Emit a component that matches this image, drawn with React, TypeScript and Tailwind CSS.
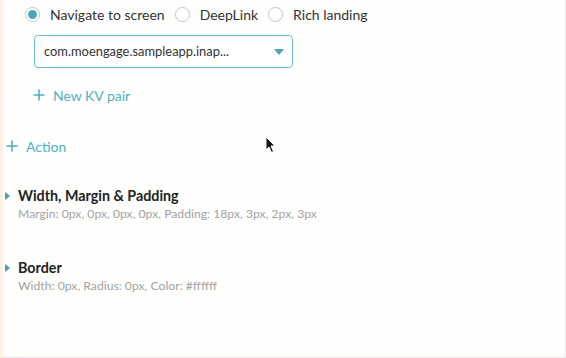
import { ReactNode } from "react";

const font = { fontFamily: "Lato, 'Open Sans', sans-serif" };

const Radio = ({ checked, label }: { checked?: boolean; label: string }) => (
  <label className="flex items-center gap-[10px] text-[14px] text-[#333]">
    <span className="flex h-[15px] w-[15px] items-center justify-center rounded-full border border-[#bcc6cf] bg-white">
      {checked && <span className="h-[9px] w-[9px] rounded-full bg-[#4aa8b8]" />}
    </span>
    <span>{label}</span>
  </label>
);

const Plus = () => (
  <svg width="12" height="12" viewBox="0 0 12 12" className="shrink-0">
    <path d="M6 0.5v11M0.5 6h11" stroke="#4fb0c2" strokeWidth="1.6" fill="none" />
  </svg>
);

const AddLink = ({ children, className }: { children: ReactNode; className: string }) => (
  <div className={`flex h-5 items-center gap-2 text-[14px] text-[#4fb0c2] ${className}`}>
    <Plus />
    <span>{children}</span>
  </div>
);

const Section = ({ title, sub, className }: { title: string; sub: string; className: string }) => (
  <div className={className}>
    <div className="flex h-[18px] items-center">
      <svg width="5" height="8" viewBox="0 0 5 8" className="ml-[2px]">
        <path d="M0 0L5 4L0 8Z" fill="#4a9fb0" />
      </svg>
      <span className="ml-[8px] text-[14.3px] font-bold text-[#222]">{title}</span>
    </div>
    <div className="ml-[15px] mt-px h-4 text-[12.2px] leading-4 text-[#a3a3a3]">{sub}</div>
  </div>
);

const App = () => {
  return (
    <div
      style={font}
      className="relative h-[358px] w-[566px] overflow-hidden border-b border-l-[3px] border-r border-b-[#f2e4ee] border-l-[#fdf0e4] border-r-[#ececec] bg-[#fefefd]"
    >
      <div className="ml-[22px] mt-1 flex h-5 items-center gap-[10px]">
        <Radio checked label="Navigate to screen" />
        <Radio label="DeepLink" />
        <Radio label="Rich landing" />
      </div>

      <div className="ml-[31px] mt-[11px] flex h-[33px] w-[259px] items-center justify-between rounded-[4px] border border-[#6cc0cf] bg-white pl-[9px] pr-[8px]">
        <span className="text-[12.9px] text-[#333]">com.moengage.sampleapp.inap...</span>
        <svg width="10" height="6" viewBox="0 0 10 6">
          <path d="M0 0H10L5 6Z" fill="#4aa8b8" />
        </svg>
      </div>

      <AddLink className="ml-[30px] mt-[17px]">New KV pair</AddLink>
      <AddLink className="ml-[3px] mt-[31px]">Action</AddLink>

      <Section
        className="mt-[31px]"
        title="Width, Margin & Padding"
        sub="Margin: 0px, 0px, 0px, 0px, Padding: 18px, 3px, 2px, 3px"
      />
      <Section className="mt-[37px]" title="Border" sub="Width: 0px, Radius: 0px, Color: #ffffff" />

      <svg width="12" height="18" viewBox="0 0 12 18" className="absolute left-[262px] top-[136px]">
        <path d="M1 1V14L4 11L6.5 16.5L8.5 15.5L6 10H10Z" fill="#111" stroke="#fff" strokeWidth="1" />
      </svg>
    </div>
  );
};

export default App;
